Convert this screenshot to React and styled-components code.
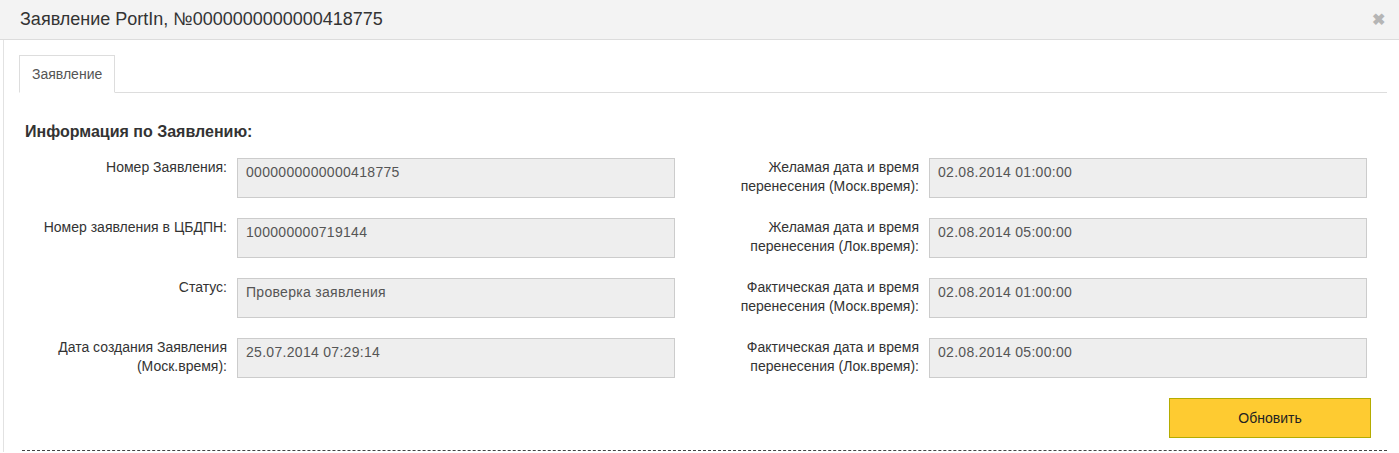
import React from 'react';
import styled, { createGlobalStyle } from 'styled-components';

const Global = createGlobalStyle`
  html, body {
    margin: 0;
    padding: 0;
    background: #fff;
  }
  body {
    font-family: "Liberation Sans", Arial, sans-serif;
    font-size: 14px;
    color: #333;
  }
`;

const Modal = styled.div`
  width: 1399px;
  height: 453px;
  overflow: hidden;
`;

const Header = styled.div`
  height: 40px;
  background: #f3f3f3;
  border-bottom: 1px solid #dcdcdc;
  display: flex;
  align-items: center;
  justify-content: space-between;
  padding: 0 14px 0 20px;
  box-sizing: border-box;
`;

const Title = styled.h4`
  margin: 0;
  font-size: 18px;
  font-weight: normal;
  color: #333;
`;

const Close = styled.span`
  font-size: 16px;
  font-weight: bold;
  color: #b5b5b5;
  line-height: 1;
  cursor: pointer;
`;

const Body = styled.div`
  margin-left: 3px;
  border-left: 1px solid #e2e2e2;
  padding: 15px 12px 0 15px;
  height: 412px;
  box-sizing: border-box;
`;

const Tabs = styled.div`
  display: flex;
  border-bottom: 1px solid #dddddd;
  height: 37px;
`;

const Tab = styled.div`
  padding: 0 12px;
  height: 38px;
  box-sizing: border-box;
  border: 1px solid #dddddd;
  border-bottom-color: #fff;
  background: #fff;
  display: flex;
  align-items: center;
  color: #555;
  font-size: 14px;
`;

const Heading = styled.h3`
  margin: 30px 0 0 6px;
  font-size: 16px;
  font-weight: bold;
  color: #333;
  line-height: 18px;
`;

const Grid = styled.div`
  display: grid;
  grid-template-columns: 656px 656px;
  column-gap: 36px;
  margin-top: 17px;
`;

const Column = styled.div`
  display: flex;
  flex-direction: column;
  gap: 20px;
`;

const Row = styled.div`
  display: flex;
  gap: 10px;
`;

const Label = styled.label`
  width: 208px;
  text-align: right;
  line-height: 19px;
  color: #333;
`;

const Value = styled.div`
  width: 438px;
  height: 40px;
  box-sizing: border-box;
  background: #eeeeee;
  border: 1px solid #cccccc;
  padding: 4px 8px;
  line-height: 18px;
  letter-spacing: 0.3px;
  color: #555;
`;

const Actions = styled.div`
  display: flex;
  justify-content: flex-end;
  margin-top: 20px;
  padding-right: 16px;
`;

const Button = styled.button`
  width: 202px;
  height: 40px;
  background: #fecb31;
  border: 1px solid #b4ac00;
  font-family: inherit;
  font-size: 14px;
  color: #222;
  cursor: pointer;
`;

const Divider = styled.div`
  margin: 12px 0 0 3px;
  border-top: 1px dashed #444;
`;

const left = [
  ['Номер Заявления:', '0000000000000418775'],
  ['Номер заявления в ЦБДПН:', '100000000719144'],
  ['Статус:', 'Проверка заявления'],
  ['Дата создания Заявления (Моск.время):', '25.07.2014 07:29:14'],
];

const right = [
  ['Желамая дата и время перенесения (Моск.время):', '02.08.2014 01:00:00'],
  ['Желамая дата и время перенесения (Лок.время):', '02.08.2014 05:00:00'],
  ['Фактическая дата и время перенесения (Моск.время):', '02.08.2014 01:00:00'],
  ['Фактическая дата и время перенесения (Лок.время):', '02.08.2014 05:00:00'],
];

function Field({ label, value }) {
  return (
    <Row>
      <Label>{label}</Label>
      <Value>{value}</Value>
    </Row>
  );
}

export default function App() {
  return (
    <Modal>
      <Global />
      <Header>
        <Title>Заявление PortIn, №0000000000000418775</Title>
        <Close>✖</Close>
      </Header>
      <Body>
        <Tabs>
          <Tab>Заявление</Tab>
        </Tabs>
        <Heading>Информация по Заявлению:</Heading>
        <Grid>
          <Column>
            {left.map(([l, v]) => (
              <Field key={l} label={l} value={v} />
            ))}
          </Column>
          <Column>
            {right.map(([l, v]) => (
              <Field key={l} label={l} value={v} />
            ))}
          </Column>
        </Grid>
        <Actions>
          <Button>Обновить</Button>
        </Actions>
        <Divider />
      </Body>
    </Modal>
  );
}
